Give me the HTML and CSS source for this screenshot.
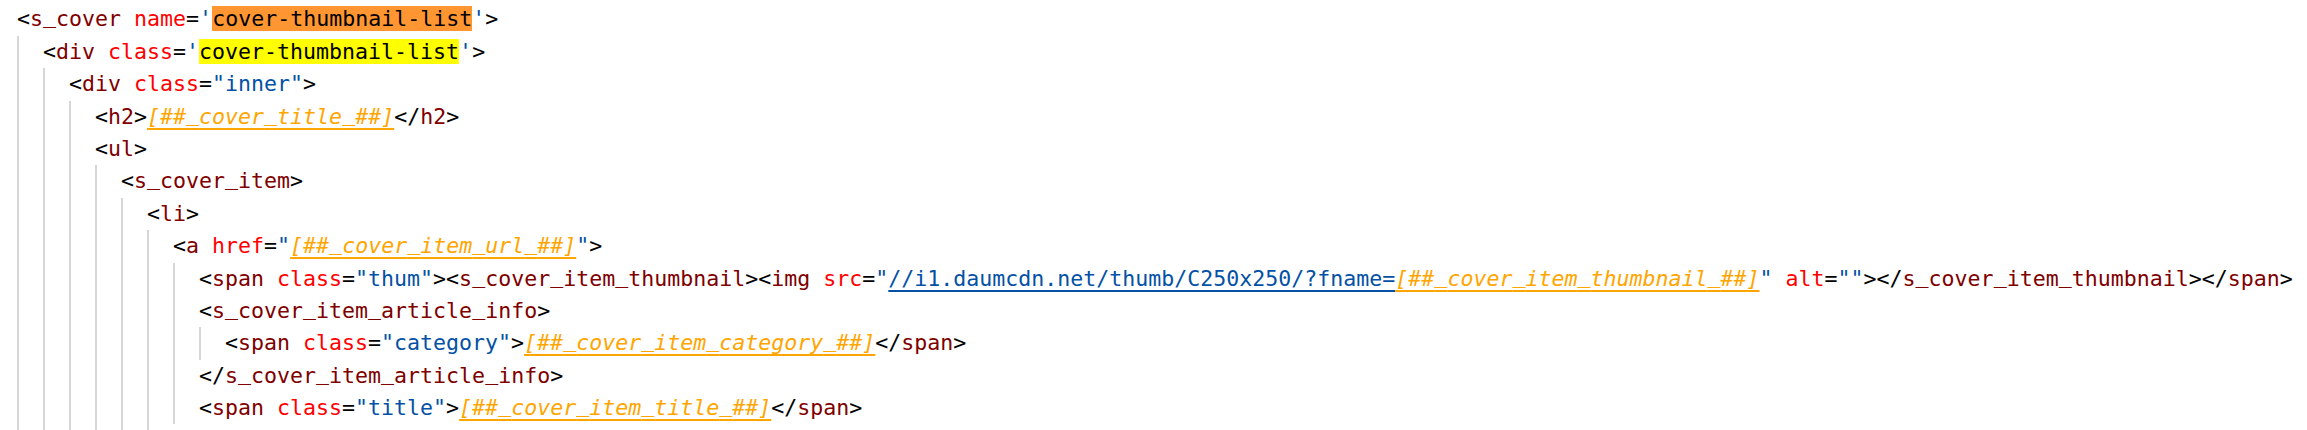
FILE: index.html
```html
<!DOCTYPE html>
<html lang="en">
<head>
<meta charset="utf-8">
<title>cover-thumbnail-list</title>
<link rel="stylesheet" href="styles.css">
</head>
<body>
<div class="code">
  <div class="ln"><span class="p">&lt;</span><span class="t">s<span class="us">_</span>cover</span> <span class="a">name</span><span class="p">=</span><span class="s">'</span><span class="hl-o">cover-thumbnail-list</span><span class="s">'</span><span class="p">&gt;</span></div>
  <div class="blk open">
    <div class="ln"><span class="p">&lt;</span><span class="t">div</span> <span class="a">class</span><span class="p">=</span><span class="s">'</span><span class="hl-y">cover-thumbnail-list</span><span class="s">'</span><span class="p">&gt;</span></div>
    <div class="blk open">
      <div class="ln"><span class="p">&lt;</span><span class="t">div</span> <span class="a">class</span><span class="p">=</span><span class="s">"inner"</span><span class="p">&gt;</span></div>
      <div class="blk open">
        <div class="ln"><span class="p">&lt;</span><span class="t">h2</span><span class="p">&gt;</span><span class="v">[##<span class="us">_</span>cover<span class="us">_</span>title<span class="us">_</span>##]</span><span class="p">&lt;/</span><span class="t">h2</span><span class="p">&gt;</span></div>
        <div class="ln"><span class="p">&lt;</span><span class="t">ul</span><span class="p">&gt;</span></div>
        <div class="blk open">
          <div class="ln"><span class="p">&lt;</span><span class="t">s<span class="us">_</span>cover<span class="us">_</span>item</span><span class="p">&gt;</span></div>
          <div class="blk open">
            <div class="ln"><span class="p">&lt;</span><span class="t">li</span><span class="p">&gt;</span></div>
            <div class="blk open">
              <div class="ln"><span class="p">&lt;</span><span class="t">a</span> <span class="a">href</span><span class="p">=</span><span class="s">"</span><span class="v">[##<span class="us">_</span>cover<span class="us">_</span>item<span class="us">_</span>url<span class="us">_</span>##]</span><span class="s">"</span><span class="p">&gt;</span></div>
              <div class="blk">
                <div class="ln"><span class="p">&lt;</span><span class="t">span</span> <span class="a">class</span><span class="p">=</span><span class="s">"thum"</span><span class="p">&gt;&lt;</span><span class="t">s<span class="us">_</span>cover<span class="us">_</span>item<span class="us">_</span>thumbnail</span><span class="p">&gt;&lt;</span><span class="t">img</span> <span class="a">src</span><span class="p">=</span><span class="s">"</span><span class="u">//i1.daumcdn.net/thumb/C250x250/?fname=</span><span class="v">[##<span class="us">_</span>cover<span class="us">_</span>item<span class="us">_</span>thumbnail<span class="us">_</span>##]</span><span class="s">"</span> <span class="a">alt</span><span class="p">=</span><span class="s">""</span><span class="p">&gt;&lt;/</span><span class="t">s<span class="us">_</span>cover<span class="us">_</span>item<span class="us">_</span>thumbnail</span><span class="p">&gt;&lt;/</span><span class="t">span</span><span class="p">&gt;</span></div>
                <div class="ln"><span class="p">&lt;</span><span class="t">s<span class="us">_</span>cover<span class="us">_</span>item<span class="us">_</span>article<span class="us">_</span>info</span><span class="p">&gt;</span></div>
                <div class="blk">
                  <div class="ln"><span class="p">&lt;</span><span class="t">span</span> <span class="a">class</span><span class="p">=</span><span class="s">"category"</span><span class="p">&gt;</span><span class="v">[##<span class="us">_</span>cover<span class="us">_</span>item<span class="us">_</span>category<span class="us">_</span>##]</span><span class="p">&lt;/</span><span class="t">span</span><span class="p">&gt;</span></div>
                </div>
                <div class="ln"><span class="p">&lt;/</span><span class="t">s<span class="us">_</span>cover<span class="us">_</span>item<span class="us">_</span>article<span class="us">_</span>info</span><span class="p">&gt;</span></div>
                <div class="ln"><span class="p">&lt;</span><span class="t">span</span> <span class="a">class</span><span class="p">=</span><span class="s">"title"</span><span class="p">&gt;</span><span class="v">[##<span class="us">_</span>cover<span class="us">_</span>item<span class="us">_</span>title<span class="us">_</span>##]</span><span class="p">&lt;/</span><span class="t">span</span><span class="p">&gt;</span></div>
              </div>
            </div>
          </div>
        </div>
      </div>
    </div>
  </div>
</div>
</body>
</html>
```
FILE: styles.css
```css
html, body {
  margin: 0;
  padding: 0;
  background: #ffffff;
}

.code {
  box-sizing: border-box;
  height: 430px;
  overflow: hidden;
  padding: 3.4px 0 0 17px;
  font-family: "DejaVu Sans Mono", "Liberation Mono", monospace;
  font-size: 21.6px;
  line-height: 1.5;
  color: #000000;
}

.ln {
  white-space: pre;
}

.blk {
  border-left: 2px solid #d6d6d6;
  padding-left: 24px;
}

.blk.open {
  padding-bottom: 8px;
}

.p { color: #000000; }
.t { color: #800000; }
.a { color: #ff0000; }
.s { color: #0451a5; }

.us {
  position: relative;
  top: -3px;
}

.v {
  color: #ffa500;
  font-style: italic;
  text-decoration: underline 2px #ffa500;
  text-underline-offset: 4px;
  text-decoration-skip-ink: none;
}

.u {
  color: #0451a5;
  text-decoration: underline 2px #0451a5;
  text-underline-offset: 4px;
  text-decoration-skip-ink: none;
}

.hl-o {
  background: #ff9632;
  color: #000000;
}

.hl-y {
  background: #ffff00;
  color: #000000;
}
```
